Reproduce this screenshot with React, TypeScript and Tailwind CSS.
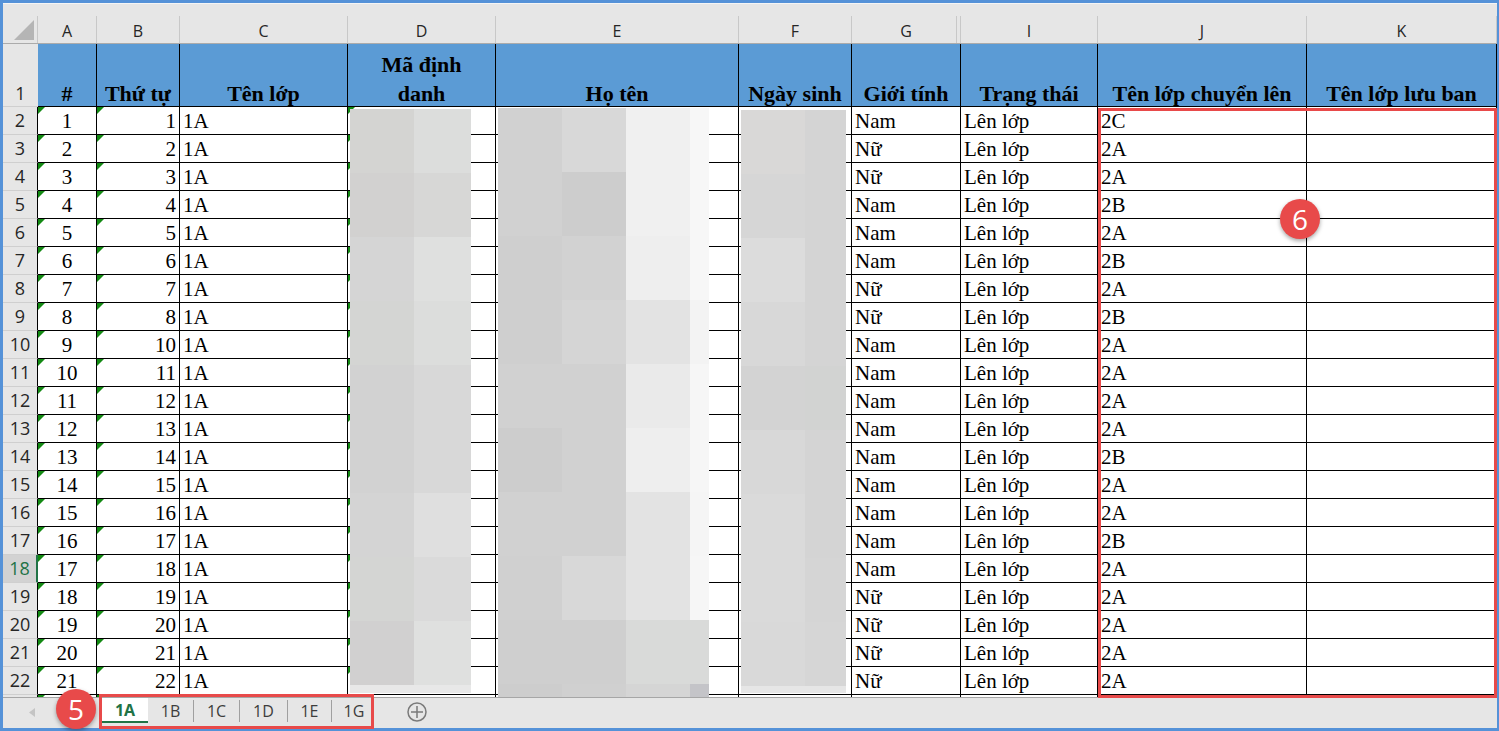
import React from 'react';

type Col = { id: string; w: string; head: React.ReactNode; align: string; tri?: boolean };

const cols: Col[] = [
  { id: 'A', w: 'w-[59px]', head: '#', align: 'justify-center', tri: true },
  { id: 'B', w: 'w-[83px]', head: 'Thứ tự', align: 'justify-end', tri: true },
  { id: 'C', w: 'w-[168px]', head: 'Tên lớp', align: 'justify-start' },
  { id: 'D', w: 'w-[148px]', head: <>Mã định<br />danh</>, align: 'justify-start', tri: true },
  { id: 'E', w: 'w-[243px]', head: 'Họ tên', align: 'justify-start' },
  { id: 'F', w: 'w-[113px]', head: 'Ngày sinh', align: 'justify-start' },
  { id: 'G', w: 'w-[109px]', head: 'Giới tính', align: 'justify-start' },
  { id: 'I', w: 'w-[137px]', head: 'Trạng thái', align: 'justify-start' },
  { id: 'J', w: 'w-[209px]', head: 'Tên lớp chuyển lên', align: 'justify-start' },
  { id: 'K', w: 'flex-1', head: 'Tên lớp lưu ban', align: 'justify-start' },
];

const gender = ['Nam', 'Nữ', 'Nữ', 'Nam', 'Nam', 'Nam', 'Nữ', 'Nữ', 'Nam', 'Nam', 'Nam', 'Nam', 'Nam', 'Nam', 'Nam', 'Nam', 'Nam', 'Nữ', 'Nữ', 'Nữ', 'Nữ'];
const moveTo = ['2C', '2A', '2A', '2B', '2A', '2B', '2A', '2B', '2A', '2A', '2A', '2A', '2B', '2A', '2A', '2B', '2A', '2A', '2A', '2A', '2A'];

// rows 2..22 plus the top sliver of row 23
const rows = Array.from({ length: 22 }, (_, i) => {
  const n = i + 2;
  if (n === 23) return { n, label: '', cells: ['', '', '', '', '', '', '', '', '', ''] };
  return {
    n,
    label: String(n),
    cells: [String(n - 1), String(n < 10 ? n - 1 : n), '1A', '', '', '', gender[i], 'Lên lớp', moveTo[i], ''],
  };
});

// pixelated blocks hiding personal data
const dWidths = ['w-[64px]', 'w-[57px]'];
const dTiles = [
  ['bg-[#d4d4d2]', 'bg-[#dcdddc]'],
  ['bg-[#d2d1d0]', 'bg-[#d7d7d6]'],
  ['bg-[#d5d5d5]', 'bg-[#dfe0df]'],
  ['bg-[#d4d5d3]', 'bg-[#dcdddc]'],
  ['bg-[#d2d2d2]', 'bg-[#d8d8d8]'],
  ['bg-[#d2d2d2]', 'bg-[#d8d8d8]'],
  ['bg-[#d4d4d4]', 'bg-[#dfdfdf]'],
  ['bg-[#d4d5d3]', 'bg-[#dadada]'],
  ['bg-[#d1d0d0]', 'bg-[#dfe0df]'],
];
const eWidths = ['w-[64px]', 'w-[64px]', 'w-[64px]', 'w-[19px]'];
const eTiles = [
  ['bg-[#d1d1d1]', 'bg-[#d8d8d8]', 'bg-[#f0f0f0]', 'bg-[#f7f7f7]'],
  ['bg-[#d1d1d1]', 'bg-[#cdcdcd]', 'bg-[#f0f0f0]', 'bg-[#f7f7f7]'],
  ['bg-[#cfcfcf]', 'bg-[#d2d2d2]', 'bg-[#eeeeee]', 'bg-[#f7f7f7]'],
  ['bg-[#cfcfcf]', 'bg-[#d5d5d5]', 'bg-[#e3e3e3]', 'bg-[#f3f3f3]'],
  ['bg-[#d1d1d1]', 'bg-[#d1d1d1]', 'bg-[#eaeaea]', 'bg-[#f6f6f6]'],
  ['bg-[#cdcdcd]', 'bg-[#d1d1d1]', 'bg-[#eeeeee]', 'bg-[#f6f6f6]'],
  ['bg-[#d1d1d1]', 'bg-[#d1d1d1]', 'bg-[#e3e3e3]', 'bg-[#f5f5f5]'],
  ['bg-[#d0d0d0]', 'bg-[#d8d8d8]', 'bg-[#e3e3e3]', 'bg-[#f6f6f6]'],
  ['bg-[#cfcfcf]', 'bg-[#cfcfcf]', 'bg-[#d9dad9]', 'bg-[#d9dad9]'],
];
const fWidths = ['w-[64px]', 'w-[41px]'];
const fTiles = [
  ['bg-[#d9d8d7]', 'bg-[#d4d4d4]'],
  ['bg-[#d6d6d6]', 'bg-[#d4d4d4]'],
  ['bg-[#dcdcdc]', 'bg-[#d4d4d4]'],
  ['bg-[#d8d8d8]', 'bg-[#d4d4d4]'],
  ['bg-[#d3d3d3]', 'bg-[#d2d3d2]'],
  ['bg-[#d8d8d8]', 'bg-[#d4d4d4]'],
  ['bg-[#dadada]', 'bg-[#d4d4d4]'],
  ['bg-[#dadada]', 'bg-[#d5d5d5]'],
  ['bg-[#d9d9d9]', 'bg-[#d6d6d6]'],
];

const Mosaic = ({ pos, widths, tiles, tail, tailH }: { pos: string; widths: string[]; tiles: string[][]; tail: string[]; tailH: string }) => (
  <div className={`absolute flex flex-col ${pos}`}>
    {tiles.map((r, i) => (
      <div key={i} className="flex h-[64px]">
        {r.map((bg, j) => <div key={j} className={`${widths[j]} ${bg}`} />)}
      </div>
    ))}
    <div className={`flex ${tailH}`}>
      {tail.map((bg, j) => <div key={j} className={`${widths[j]} ${bg}`} />)}
    </div>
  </div>
);

const Badge = ({ n, pos }: { n: string; pos: string }) => (
  <div className={`absolute z-20 flex h-[40px] w-[40px] items-center justify-center rounded-full bg-[#e84a4a] font-['Open_Sans',sans-serif] text-[28px] leading-none text-white shadow-[0_2px_4px_rgba(0,0,0,0.35)] ${pos}`}>
    {n}
  </div>
);

const ColumnHeaders = () => (
  <div className="flex h-[28px] shrink-0 border-b border-[#ababab] bg-[#e6e6e6] font-['Open_Sans',sans-serif] text-[16px] text-[#262626]">
    <div className="relative w-[35px] shrink-0 border-r border-[#c8c8c8]">
      <svg className="absolute bottom-[3px] right-[3px]" width="20" height="20" viewBox="0 0 20 20">
        <polygon points="20,0 20,20 0,20" fill="#b5b5b5" />
      </svg>
    </div>
    {cols.map((c) => (
      <div
        key={c.id}
        className={`flex shrink-0 items-center justify-center border-r border-[#c8c8c8] pt-[2px] ${c.w} ${c.id === 'G' ? 'shadow-[inset_-3px_0_0_#e6e6e6,inset_-4px_0_0_#c8c8c8]' : ''}`}
      >
        {c.id}
      </div>
    ))}
  </div>
);

const TitleRow = () => (
  <div className="flex h-[63px] shrink-0">
    <div className="flex w-[35px] shrink-0 items-end justify-center border-b border-[#cfcfcf] bg-[#e6e6e6] pb-[1px] font-['Open_Sans',sans-serif] text-[18px] leading-[24px] text-[#262626]">
      1
    </div>
    {cols.map((c) => (
      <div
        key={c.id}
        className={`flex shrink-0 items-end justify-center border-r border-b border-black bg-[#5b9bd5] text-center font-['Liberation_Serif',serif] text-[22px] font-bold leading-[29px] text-black ${c.w}`}
      >
        <span className="translate-y-[2px]">{c.head}</span>
      </div>
    ))}
  </div>
);

const SheetBody = () => (
  <div className="relative h-[590px] shrink-0">
    <div className="h-full overflow-hidden">
      {rows.map((r) => {
        const sel = r.n === 18;
        return (
          <div key={r.n} className="flex h-[28px]">
            <div
              className={`flex w-[35px] shrink-0 items-center justify-center border-b font-['Open_Sans',sans-serif] text-[18px] ${
                sel ? 'border-r-2 border-b-[#cfcfcf] border-r-[#217346] bg-[#d2d2d2] text-[#217346]' : 'border-r border-b-[#cfcfcf] border-r-black bg-[#e6e6e6] text-[#262626]'
              }`}
            >
              {r.label}
            </div>
            {cols.map((c, i) => (
              <div
                key={c.id}
                className={`relative flex shrink-0 items-center border-r border-b border-black px-[3px] pt-[1px] font-['Liberation_Serif',serif] text-[21px] leading-[27px] text-black ${c.w} ${c.align}`}
              >
                {c.tri && <span className="absolute left-0 top-0 h-[7px] w-[7px] bg-[#138a13] [clip-path:polygon(0_0,100%_0,0_100%)]" />}
                {r.cells[i]}
              </div>
            ))}
          </div>
        );
      })}
    </div>

    <Mosaic pos="left-[347px] top-[2px]" widths={dWidths} tiles={dTiles} tail={['bg-[#e8e8e8]', 'bg-[#e8e8e8]']} tailH="h-[8px]" />
    <Mosaic
      pos="left-[495px] top-[1px]"
      widths={eWidths}
      tiles={eTiles}
      tail={['bg-[#cdcdcd]', 'bg-[#d0d0d0]', 'bg-[#d5d5d5]', 'bg-[#c4c4c8]']}
      tailH="h-[13px]"
    />
    <Mosaic pos="left-[738px] top-[3px]" widths={fWidths} tiles={fTiles} tail={['bg-[#e6e6e6]', 'bg-[#e6e6e6]']} tailH="h-[7px]" />

    {/* highlighted target range J2:K22 */}
    <div className="absolute -bottom-[1px] left-[1095px] right-0 top-[1px] z-10 border-[3px] border-[#e84a4a]" />
    <Badge n="6" pos="left-[1277px] top-[92px]" />
  </div>
);

const tabs = [
  { name: '1A', w: 'w-[46px]' },
  { name: '1B', w: 'w-[45px]' },
  { name: '1C', w: 'w-[45px]' },
  { name: '1D', w: 'w-[47px]' },
  { name: '1E', w: 'w-[43px]' },
  { name: '1G', w: 'w-[44px]' },
];

const SheetTabs = () => (
  <div className="relative flex h-[31px] shrink-0 border-t border-[#a6a6a6] bg-[#e6e6e6] font-['Open_Sans',sans-serif] text-[16px]">
    <div className="flex w-[99px] shrink-0 items-center pl-[26px] pb-[2px]">
      <svg width="7" height="9" viewBox="0 0 7 9">
        <polygon points="6,0 6,9 0,4.5" fill="#c4c4c4" />
      </svg>
    </div>
    <div className="flex h-full items-start">
      {tabs.map((t, i) => {
        const active = i === 0;
        return (
          <div key={t.name} className="flex h-full items-start">
            {i > 1 && <div className="mt-[2px] h-[22px] w-px bg-[#a0a0a0]" />}
            <div
              className={`flex h-[25px] items-center justify-center ${t.w} ${
                active ? 'border-b-2 border-[#217346] bg-white font-bold text-[#217346]' : 'text-[#3d3d3d]'
              }`}
            >
              {t.name}
            </div>
          </div>
        );
      })}
    </div>
    <div className="ml-[31px] flex items-center pb-[2px]">
      <svg width="20" height="20" viewBox="0 0 20 20" fill="none" stroke="#7a7a7a" strokeWidth="1.5">
        <circle cx="10" cy="10" r="9" />
        <path d="M10 4v12M4 10h12" />
      </svg>
    </div>

    {/* highlighted sheet tabs */}
    <div className="absolute -top-[4px] left-[96px] z-20 h-[35px] w-[275px] border-[3px] border-[#e84a4a]" />
    <Badge n="5" pos="left-[53px] -top-[9px]" />
  </div>
);

export default function App() {
  return (
    <div className="h-[731px] w-[1499px] overflow-hidden bg-[#5592d8] pt-[3px] pr-[2px] pb-[3px] pl-[3px]">
      <div className="flex h-full flex-col bg-white">
        <div className="h-[13px] shrink-0 border-t border-[#f5f5f5] bg-[#e6e6e6]" />
        <ColumnHeaders />
        <TitleRow />
        <SheetBody />
        <SheetTabs />
      </div>
    </div>
  );
}
